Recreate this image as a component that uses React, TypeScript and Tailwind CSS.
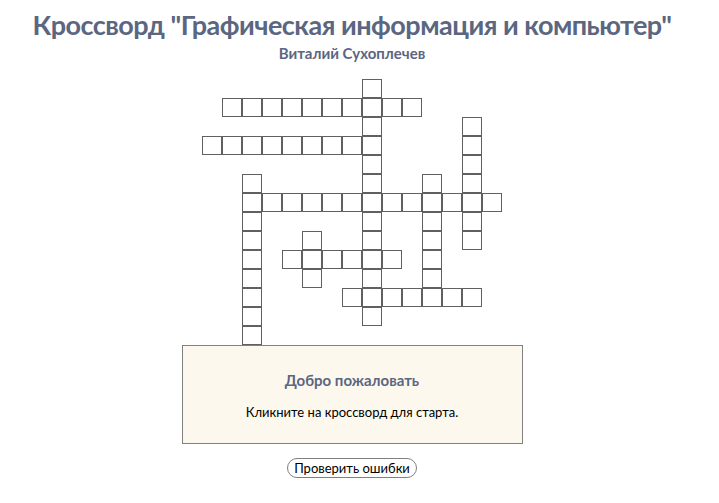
const words = [
  { row: 1, col: 1, len: 10, across: true },
  { row: 3, col: 0, len: 9, across: true },
  { row: 6, col: 2, len: 13, across: true },
  { row: 9, col: 4, len: 6, across: true },
  { row: 11, col: 7, len: 7, across: true },
  { row: 0, col: 8, len: 13, across: false },
  { row: 2, col: 13, len: 7, across: false },
  { row: 5, col: 2, len: 9, across: false },
  { row: 5, col: 11, len: 7, across: false },
  { row: 8, col: 5, len: 3, across: false },
]

function getCells() {
  const seen = new Set<string>()
  const cells: { row: number; col: number }[] = []
  for (const w of words) {
    for (let i = 0; i < w.len; i++) {
      const row = w.across ? w.row : w.row + i
      const col = w.across ? w.col + i : w.col
      const key = row + "-" + col
      if (!seen.has(key)) {
        seen.add(key)
        cells.push({ row, col })
      }
    }
  }
  return cells
}

export default function App() {
  const cells = getCells()
  return (
    <div className="w-[704px] flex flex-col items-center bg-white" style={{ fontFamily: 'Lato, sans-serif' }}>
      <h1 className="pt-[8px] whitespace-nowrap text-[27px] leading-[34px] font-bold tracking-[-0.5px] text-[#5b6680]">
        Кроссворд "Графическая информация и компьютер"
      </h1>
      <div className="mt-[2px] text-[15px] leading-[18px] font-bold text-[#5b6680]">Виталий Сухоплечев</div>

      <div className="mt-[17px] grid grid-cols-[repeat(15,20px)] grid-rows-[repeat(14,19px)]">
        {cells.map((c) => (
          <div
            key={c.row + "-" + c.col}
            className="border border-[#606060] bg-white"
            style={{ gridColumnStart: c.col + 1, gridRowStart: c.row + 1 }}
          />
        ))}
      </div>

      <div className="w-[341px] h-[99px] border border-[#808080] bg-[#fdf8ee] flex flex-col items-center">
        <div className="mt-[24px] text-[15px] leading-[20px] font-bold text-[#5b6680]">Добро пожаловать</div>
        <div className="mt-[13px] text-[13px] leading-[18px] text-black">Кликните на кроссворд для старта.</div>
      </div>

      <button className="mt-[14px] h-[20px] px-[6px] rounded-full border border-[#808080] bg-white text-[13px] leading-[16px] text-black">
        Проверить ошибки
      </button>
    </div>
  )
}
